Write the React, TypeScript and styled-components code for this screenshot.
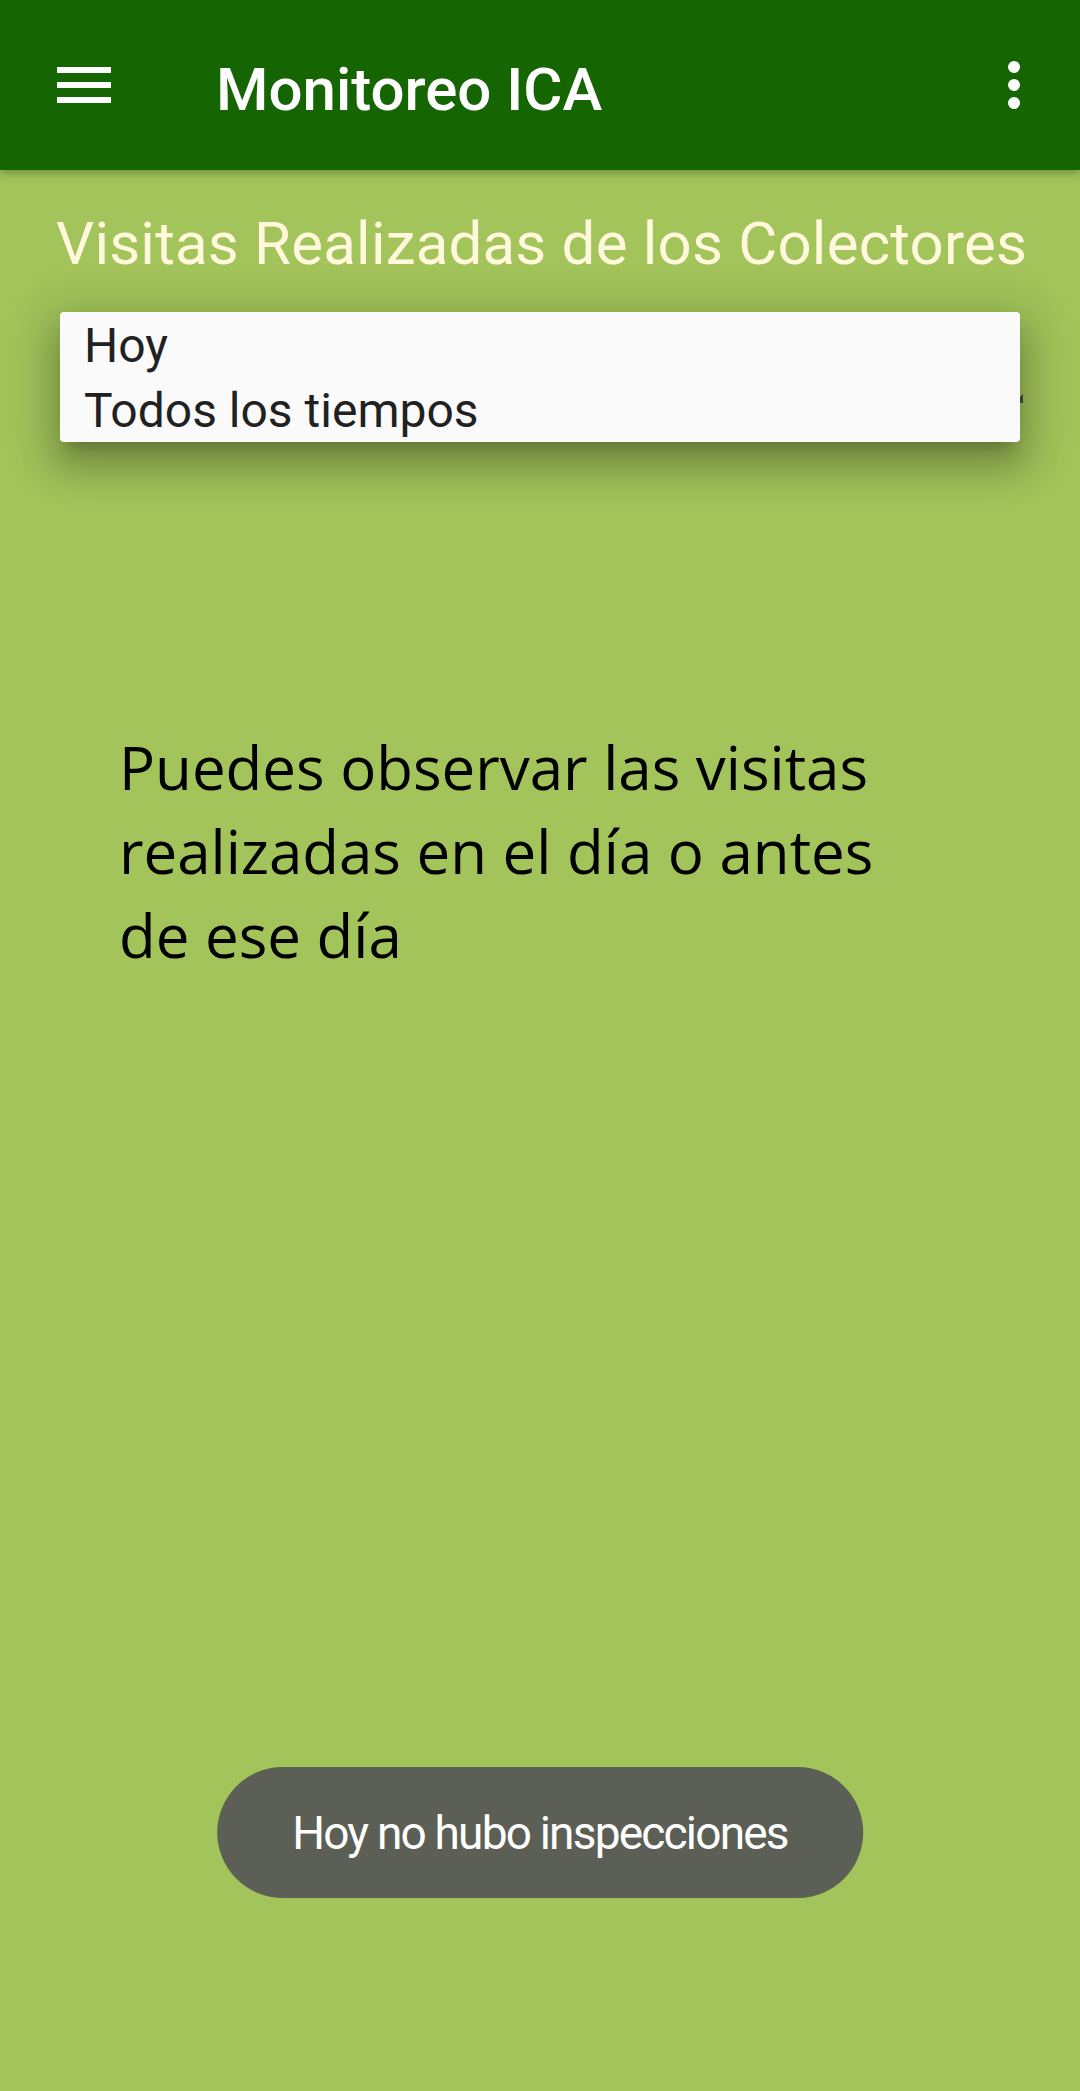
import React from "react";
import styled, { createGlobalStyle } from "styled-components";

const GlobalStyle = createGlobalStyle`
  html, body {
    margin: 0;
    padding: 0;
    background: #a2c45a;
  }
  * { box-sizing: border-box; }
`;

const Page = styled.div`
  position: relative;
  width: 1080px;
  min-height: 2091px;
  background: #a2c45a;
  font-family: Roboto, "Noto Sans", sans-serif;
  overflow: hidden;
`;

const AppBar = styled.header`
  position: relative;
  z-index: 2;
  height: 170px;
  background: #156502;
  display: flex;
  align-items: center;
  box-shadow: 0 3px 9px rgba(0, 0, 0, 0.3);
`;

const IconSlot = styled.div<{ $left?: number; $right?: number }>`
  width: 72px;
  height: 72px;
  margin-left: ${(p) => p.$left ?? 0}px;
  margin-right: ${(p) => p.$right ?? 0}px;
  display: flex;
  align-items: center;
  justify-content: center;
  flex-shrink: 0;
`;

const Title = styled.h1`
  margin: 0 0 0 96px;
  padding-top: 9px;
  flex: 1;
  font-family: Roboto, sans-serif;
  font-weight: 500;
  font-size: 60px;
  line-height: 70px;
  color: #ffffff;
`;

const Main = styled.main`
  display: flex;
  flex-direction: column;
  padding: 0 56px;
`;

const Subtitle = styled.h2`
  margin: 39px 0 0 0;
  font-family: Roboto, sans-serif;
  font-weight: 400;
  font-size: 60px;
  line-height: 70px;
  letter-spacing: 0.2px;
  color: #fff8dc;
  white-space: nowrap;
`;

const Spinner = styled.div`
  position: relative;
  margin: 33px 0 0 4px;
  height: 130px;
  display: flex;
  justify-content: flex-end;
  align-items: flex-start;
  padding-top: 82px;
`;

const SpinnerArrow = styled.span`
  width: 0;
  height: 0;
  border-left: 9px solid transparent;
  border-bottom: 9px solid #4a4a4a;
  margin-right: 1px;
`;

const Popup = styled.ul`
  position: absolute;
  top: 0;
  left: 0;
  right: 4px;
  margin: 0;
  padding: 0;
  list-style: none;
  background: #fafafa;
  border-radius: 4px;
  box-shadow: 0 24px 36px 6px rgba(0, 0, 0, 0.16),
    0 9px 48px 14px rgba(0, 0, 0, 0.14), 0 15px 15px -9px rgba(0, 0, 0, 0.2);
`;

const PopupItem = styled.li`
  height: 65px;
  padding: 2px 0 0 24px;
  display: flex;
  align-items: center;
  font-family: Roboto, sans-serif;
  font-size: 48px;
  color: #212121;
`;

const Message = styled.p`
  margin: 283px 0 0 63px;
  max-width: 820px;
  font-family: "Open Sans", "Noto Sans", sans-serif;
  font-weight: 400;
  font-size: 60px;
  line-height: 84px;
  color: #000000;
`;

const Toast = styled.div`
  position: absolute;
  left: 50%;
  bottom: 193px;
  transform: translateX(-50%);
  height: 131px;
  padding: 0 75px;
  display: flex;
  align-items: center;
  border-radius: 66px;
  background: #5c5f55;
  color: #ffffff;
  font-family: Roboto, sans-serif;
  font-size: 46px;
  letter-spacing: -1.8px;
  white-space: nowrap;
`;

const MenuIcon = () => (
  <svg width="72" height="72" viewBox="0 0 24 24" fill="#ffffff">
    <path d="M3 18h18v-2H3v2zm0-5h18v-2H3v2zm0-7v2h18V6H3z" />
  </svg>
);

const MoreIcon = () => (
  <svg width="72" height="72" viewBox="0 0 24 24" fill="#ffffff">
    <circle cx="12" cy="6" r="2" />
    <circle cx="12" cy="12" r="2" />
    <circle cx="12" cy="18" r="2" />
  </svg>
);

export default function App() {
  const options = ["Hoy", "Todos los tiempos"];
  return (
    <>
      <GlobalStyle />
      <Page>
        <AppBar>
          <IconSlot $left={48}>
            <MenuIcon />
          </IconSlot>
          <Title>Monitoreo ICA</Title>
          <IconSlot $right={30}>
            <MoreIcon />
          </IconSlot>
        </AppBar>
        <Main>
          <Subtitle>Visitas Realizadas de los Colectores</Subtitle>
          <Spinner>
            <SpinnerArrow />
            <Popup>
              {options.map((o) => (
                <PopupItem key={o}>{o}</PopupItem>
              ))}
            </Popup>
          </Spinner>
          <Message>
            Puedes observar las visitas realizadas en el día o antes de ese día
          </Message>
        </Main>
        <Toast>Hoy no hubo inspecciones</Toast>
      </Page>
    </>
  );
}
